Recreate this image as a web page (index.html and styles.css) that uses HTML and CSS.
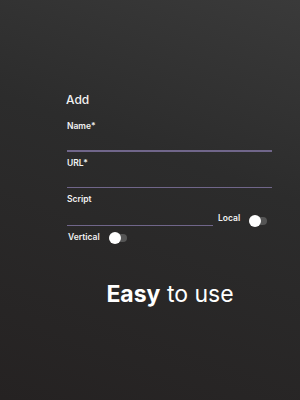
FILE: index.html
```html
<!DOCTYPE html>
<html lang="en">
<head>
    <meta charset="UTF-8">
    <meta name="viewport" content="width=device-width, initial-scale=1.0">
    <title>Add</title>
    <link rel="stylesheet" href="styles.css">
</head>
<body>
    <div class="screen">
        <div class="add-form">
            <h1 class="form-title">Add</h1>
            <div class="field">
                <label class="field-label">Name*</label>
                <div class="field-line"></div>
            </div>
            <div class="field">
                <label class="field-label">URL*</label>
                <div class="field-line"></div>
            </div>
            <div class="field">
                <label class="field-label">Script</label>
                <div class="script-row">
                    <div class="field-line short"></div>
                    <span class="toggle-label">Local</span>
                    <span class="toggle"><span class="thumb"></span></span>
                </div>
            </div>
            <div class="vertical-row">
                <span class="toggle-label">Vertical</span>
                <span class="toggle"><span class="thumb"></span></span>
            </div>
        </div>
        <p class="tagline"><b>Easy</b> to use</p>
    </div>
</body>
</html>
```

FILE: styles.css
```css
* {
    margin: 0;
    padding: 0;
    box-sizing: border-box;
}

body {
    font-family: Inter, 'Noto Sans', sans-serif;
    color: #f2f2f2;
    width: 300px;
    height: 400px;
    background: linear-gradient(200deg, #3a3a3a 0%, #2c2c2c 40%, #252222 100%);
}

.screen {
    height: 400px;
    padding-top: 93px;
}

.add-form {
    margin-left: 66px;
    width: 206px;
}

.form-title {
    font-size: 12px;
    font-weight: 500;
    line-height: 14px;
    margin-bottom: 14px;
}

.field {
    margin-bottom: 6px;
}

.field-label {
    display: block;
    font-size: 8.5px;
    font-weight: 600;
    line-height: 11px;
    margin-left: 1px;
}

.field-line {
    height: 1.5px;
    margin-top: 18px;
    margin-left: 1px;
    background-color: #70668a;
}

.script-row {
    display: flex;
    align-items: flex-end;
    padding-top: 8px;
}

.field-line.short {
    width: 146px;
    flex: none;
    margin-top: 0;
    margin-bottom: 0;
}

.script-row .toggle-label {
    margin-left: 5px;
    margin-bottom: 2px;
}

.script-row .toggle {
    margin-left: 9px;
    margin-bottom: 1px;
}

.toggle-label {
    font-size: 8.5px;
    font-weight: 600;
    line-height: 11px;
}

.toggle {
    position: relative;
    display: inline-block;
    width: 18px;
    height: 8px;
    border-radius: 4px;
    background-color: #555;
}

.thumb {
    position: absolute;
    left: 0;
    top: -2px;
    width: 12px;
    height: 12px;
    border-radius: 50%;
    background-color: #fff;
}

.vertical-row {
    display: flex;
    align-items: center;
    margin-top: 6px;
    margin-left: 2px;
}

.vertical-row .toggle {
    margin-left: 9px;
}

.tagline {
    text-align: center;
    margin-top: 37px;
    margin-left: 40px;
    font-size: 23px;
    font-weight: 400;
    color: #fff;
}

.tagline b {
    font-weight: 700;
}
```
